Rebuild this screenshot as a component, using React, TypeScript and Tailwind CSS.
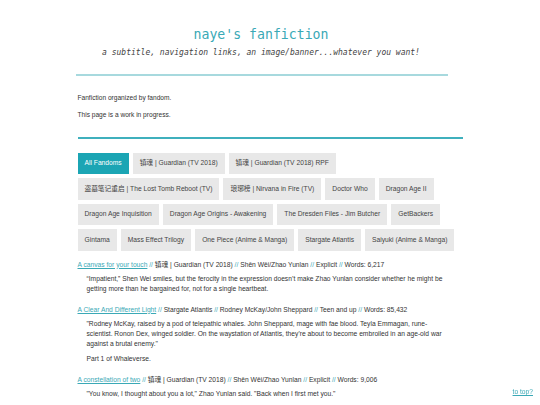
import React from "react";

const fandoms = [
  "All Fandoms",
  "镇魂 | Guardian (TV 2018)",
  "镇魂 | Guardian (TV 2018) RPF",
  "盗墓笔记重启 | The Lost Tomb Reboot (TV)",
  "琅琊榜 | Nirvana in Fire (TV)",
  "Doctor Who",
  "Dragon Age II",
  "Dragon Age Inquisition",
  "Dragon Age Origins - Awakening",
  "The Dresden Files - Jim Butcher",
  "GetBackers",
  "Gintama",
  "Mass Effect Trilogy",
  "One Piece (Anime & Manga)",
  "Stargate Atlantis",
  "Saiyuki (Anime & Manga)",
];

type Work = {
  title: string;
  meta: string[];
  summary: string[];
};

const works: Work[] = [
  {
    title: "A canvas for your touch",
    meta: ["镇魂 | Guardian (TV 2018)", "Shěn Wěi/Zhao Yunlan", "Explicit", "Words: 6,217"],
    summary: [
      "“Impatient,” Shen Wei smiles, but the ferocity in the expression doesn’t make Zhao Yunlan consider whether he might be getting more than he bargained for, not for a single heartbeat.",
    ],
  },
  {
    title: "A Clear And Different Light",
    meta: ["Stargate Atlantis", "Rodney McKay/John Sheppard", "Teen and up", "Words: 85,432"],
    summary: [
      "\"Rodney McKay, raised by a pod of telepathic whales. John Sheppard, mage with fae blood. Teyla Emmagan, rune-scientist. Ronon Dex, winged soldier. On the waystation of Atlantis, they're about to become embroiled in an age-old war against a brutal enemy.\"",
      "Part 1 of Whaleverse.",
    ],
  },
  {
    title: "A constellation of two",
    meta: ["镇魂 | Guardian (TV 2018)", "Shěn Wěi/Zhao Yunlan", "Explicit", "Words: 9,006"],
    summary: [
      "\"You know, I thought about you a lot,\" Zhao Yunlan said. \"Back when I first met you.\"",
    ],
  },
];

const sans = "font-['Liberation_Sans','Noto_Sans_CJK_SC',sans-serif]";
const mono = "font-['DejaVu_Sans_Mono',monospace]";

export default function App() {
  return (
    <div className={`min-h-[405px] bg-white text-[#333] ${sans}`}>
      <header className="pr-[18px] pt-[26px] text-center">
        <h1 className={`${mono} text-[13.2px] leading-[17px] text-[#3aa9b6]`}>
          naye's fanfiction
        </h1>
        <p className={`${mono} mt-[5px] text-[8px] italic leading-[10px] text-[#444]`}>
          a subtitle, navigation links, an image/banner...whatever you want!
        </p>
      </header>

      <div className="mx-auto w-[385px]">
        <div className="-ml-[2px] mt-[16px] h-[2px] w-[372px] bg-[#a7d9de]" />

        <div className="mt-[17px] text-[6.6px] leading-[10px]">
          <p>Fanfiction organized by fandom.</p>
          <p className="mt-[7px]">This page is a work in progress.</p>
        </div>

        <div className="mt-[17px] h-[1.5px] bg-[#3fb0bd]" />

        <nav className="mt-[14px] flex flex-wrap gap-x-[4px] gap-y-[4px]">
          {fandoms.map((f, i) => (
            <span
              key={f}
              className={`flex h-[21.5px] items-center px-[7px] text-[6.7px] ${
                i === 0 ? "bg-[#1ba5b4] text-white" : "bg-[#e8e8e8] text-[#444]"
              }`}
            >
              {f}
            </span>
          ))}
        </nav>

        <div className="mt-[9px] text-[6.7px] leading-[10px]">
          {works.map((w) => (
            <div key={w.title} className="mb-[11px]">
              <p>
                <a className="text-[#3aa9b6] underline">{w.title}</a>
                {w.meta.map((m) => (
                  <span key={m}>
                    <span className="text-[#3aa9b6]"> // </span>
                    {m}
                  </span>
                ))}
              </p>
              <div className="mt-[4px] w-[369px] pl-[9px]">
                {w.summary.map((s, i) => (
                  <p key={i} className={i > 0 ? "mt-[5px]" : ""}>
                    {s}
                  </p>
                ))}
              </div>
            </div>
          ))}
        </div>
      </div>

      <a className="fixed bottom-[8px] right-[7px] text-[6.7px] leading-[10px] text-[#3aa9b6] underline">
        to top?
      </a>
    </div>
  );
}
